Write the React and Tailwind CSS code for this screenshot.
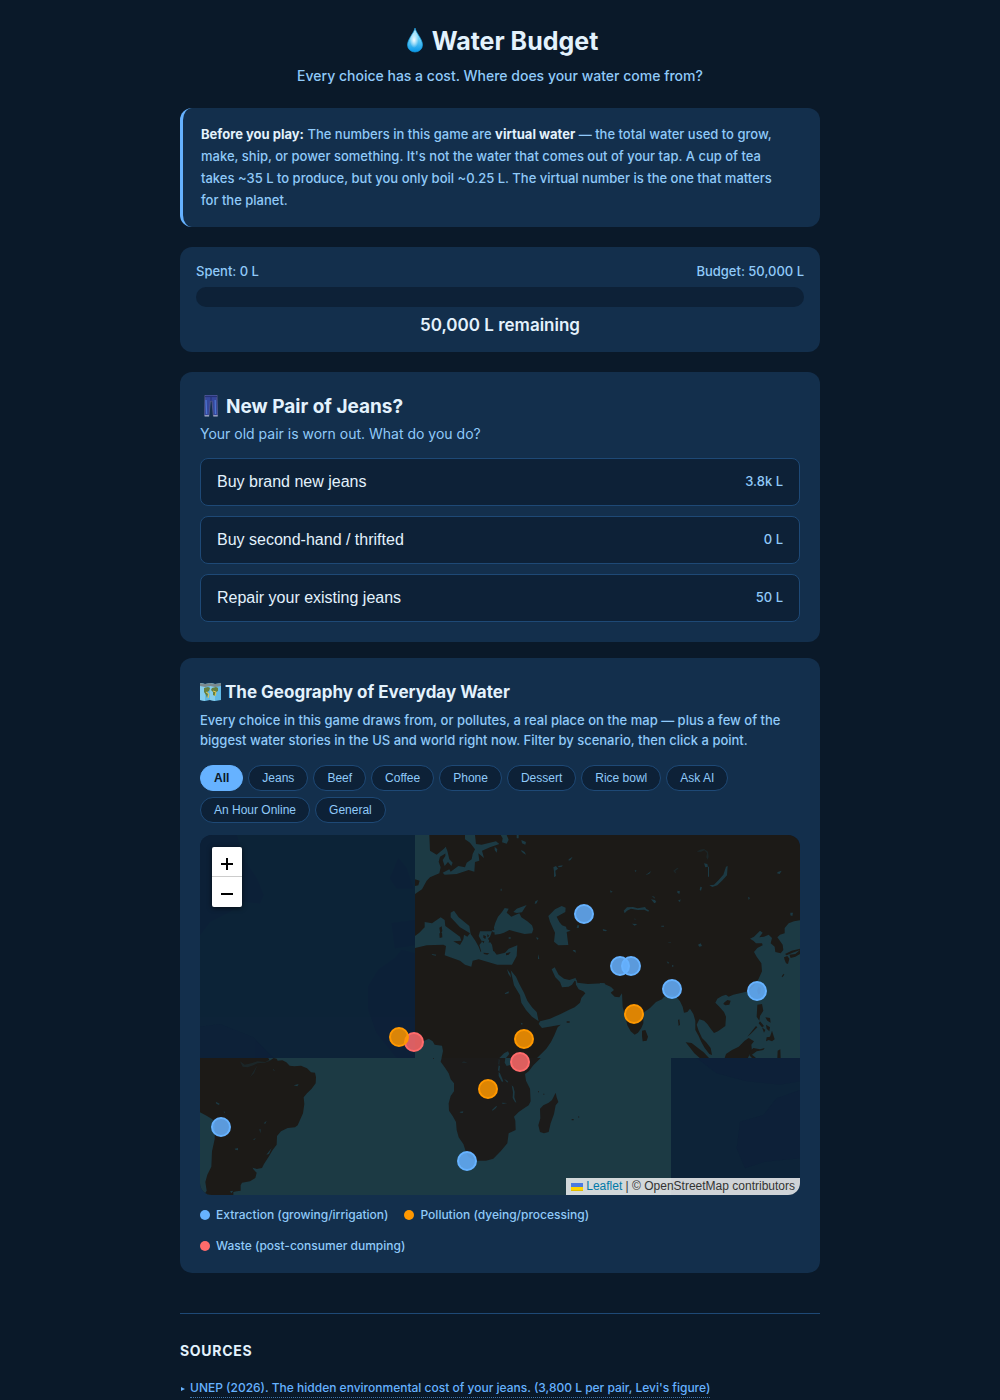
import React, { useState } from "react";

const choices = [
  { label: "Buy brand new jeans", liters: 3800, cost: "3.8k L" },
  { label: "Buy second-hand / thrifted", liters: 0, cost: "0 L" },
  { label: "Repair your existing jeans", liters: 50, cost: "50 L" },
];

const filters = [
  "All",
  "Jeans",
  "Beef",
  "Coffee",
  "Phone",
  "Dessert",
  "Rice bowl",
  "Ask AI",
  "An Hour Online",
  "General",
];

const legend = [
  { label: "Extraction (growing/irrigation)", dot: "bg-[#66b2ff]" },
  { label: "Pollution (dyeing/processing)", dot: "bg-[#ff9800]" },
  { label: "Waste (post-consumer dumping)", dot: "bg-[#ff6b6b]" },
];

const colors = {
  extraction: "#66b2ff",
  pollution: "#ff9800",
  waste: "#ff6b6b",
};

const points = [
  { x: 384, y: 79, type: "extraction" },
  { x: 420, y: 131, type: "extraction" },
  { x: 431, y: 131, type: "extraction" },
  { x: 472, y: 154, type: "extraction" },
  { x: 557, y: 156, type: "extraction" },
  { x: 434, y: 179, type: "pollution" },
  { x: 214, y: 207, type: "waste" },
  { x: 199, y: 202, type: "pollution" },
  { x: 324, y: 204, type: "pollution" },
  { x: 320, y: 227, type: "waste" },
  { x: 288, y: 254, type: "pollution" },
  { x: 21, y: 292, type: "extraction" },
  { x: 267, y: 326, type: "extraction" },
];

const DropIcon = () => (
  <svg viewBox="0 0 26 26" className="h-[26px] w-[26px] shrink-0" aria-hidden="true">
    <defs>
      <linearGradient id="drop" x1="0" y1="0" x2="0" y2="1">
        <stop offset="0" stopColor="#c9f1fb" />
        <stop offset="0.45" stopColor="#6fd0f5" />
        <stop offset="1" stopColor="#0797ea" />
      </linearGradient>
      <radialGradient id="dropShine" cx="0.45" cy="0.5" r="0.5">
        <stop offset="0" stopColor="#fff" stopOpacity="0.95" />
        <stop offset="1" stopColor="#fff" stopOpacity="0" />
      </radialGradient>
    </defs>
    <path
      d="M13 0C12 5 5.500 11 5.500 17a7.500 7 0 0 0 15 0C20.500 11 14 5 13 0Z"
      fill="url(#drop)"
      stroke="#1499dc"
      strokeWidth="0.7"
    />
    <ellipse cx="12.500" cy="12" rx="4.500" ry="8" fill="url(#dropShine)" />
  </svg>
);

const JeansIcon = () => (
  <svg viewBox="0 0 22 24" className="h-6 w-[22px] shrink-0" aria-hidden="true">
    <path
      d="M5 0h12l.6 20.500h-4.300L12 6h-1.600L9 20.500H4.600Z"
      fill="#34479b"
      stroke="#5c5d8e"
      strokeWidth="0.8"
    />
    <path d="M6 5l.6 14M15.200 5l.3 14" stroke="#4d74cf" strokeWidth="1.300" />
    <path d="M5 1.600h12M11 2v4" stroke="#243072" strokeWidth="1" />
    <path d="M4.600 20.800h4.500M13.300 20.800h4.400" stroke="#a9b3cf" strokeWidth="1.300" />
  </svg>
);

const MapIcon = () => (
  <svg viewBox="0 0 21 20" className="h-5 w-[21px] shrink-0" aria-hidden="true">
    <path d="M0 1l5 1 5-1 5 1 6-1v17l-6 1-5-1-5 1-5-1Z" fill="#62b9e4" />
    <path d="M0 1l5 1v17l-5-1ZM10 1l5 1v17l-5-1Z" fill="#86cdec" />
    <path d="M0 1l5 1 5-1 5 1 6-1v3l-6 1-5-1-5 1-5-1Z" fill="#7b898d" />
    <path
      d="M4 6l4-1 2 1-1 3-2 1 1 2-1 4-1-3-2-3ZM12 6l4-1 2 1v3l-2 1-1 4-2-1v-3l-2-2Z"
      fill="#66803f"
    />
    <path d="M6 10l3 2-1 4M13 9l3 1-1 4" stroke="#e0c552" strokeWidth="1" fill="none" />
  </svg>
);

// Water is cut out of the northern tile, land is drawn on the southern ones
const WorldTiles = () => (
  <>
    <rect x="645" width="1155" height="669" fill="#1c1a17" />

    <g transform="translate(630 -15)" fill="#1c3a44">
      <path d="M15 15L58 15L60 62L80 74L100 58L108 50L110 68L90 80L86 95L92 112L88 130L60 142L50 152L36 178L15 192Z" />
      <path d="M106 50L112 62L118 88L128 98L124 108L114 96L104 108L98 90L106 78Z" />
      <path d="M165 15L195 15L198 42L215 44L258 34L268 42L240 52L216 62L222 84L205 70L208 92L195 96L193 125L176 120L140 132L104 134L98 128L118 118L122 125L145 108L165 112L170 98L185 88L188 72L195 58L180 38L165 28Z" />
      <path d="M272 15h18l6 14-6 12-14-4 2-12ZM320 15h6v10h-6ZM334 30l14 6-2 8-10-4ZM334 60l10 6 4 8-8-4-6-6ZM254 50l8 8-2 10-6-8Z" />
      <path d="M15 318L28 308L44 292L44 276L66 280L92 262L104 270L106 288L150 320L154 332L130 334L150 345L160 328L162 314L172 320L180 310L150 292L122 262L122 248L132 242L146 262L178 288L182 312L196 332L206 350L212 366L222 358L240 362L252 364L260 374L285 368L296 356L322 346L320 378L306 404L262 404L206 388L188 392L184 410L165 404L150 392L104 376L108 348L100 344L50 346L15 354Z" />
      <path d="M210 304L246 304L240 320L234 326L246 344L250 366L214 366L208 345L216 335L206 318Z" />
      <path d="M252 292l4-14 8-18 12-14 8-12 12 2-6 12 14 12 10-4 14-6 6 12 18 12 14 12 4 12-4 12-22 2-24-6-22-6-16 8-12 4-16 2Z" />
      <path d="M310 246l10-10 16-6 14-5-8 12-6 10-16 2ZM245 301l22-1-4 6-14 1Z" />
      <path d="M415 258L435 238L455 228L467 233L466 246L440 260L448 276L456 286L468 290L470 298L482 302L470 306L475 345L445 346L432 335L435 308L420 275Z" />
      <path d="M302 421L318 440L328 462L342 488L352 512L366 532L380 546L386 574L366 560L348 540L334 518L330 496L312 466ZM291 417l10 14 2 12-8-12Z" />
      <path d="M425 418L434 412L446 434L462 446L478 450L496 444L502 456L494 452L486 464L476 470L456 472L450 456L436 442Z" />
      <path d="M496 442L502 458L534 462L580 460L588 464L602 470L602 690L375 690L391 674L409 656L423 636L433 616L443 592L452 584L396 594L386 582L390 574L420 566L452 552L476 540L494 532L510 518L514 504L526 490L520 484L506 478L498 464Z" />
      <path d="M40 634l16-8 12 8 6 10 22 3 3 16-5 24H15v-22l16-8Z" />
      <path d="M430 112l8-4 6 8-8 6 2 16-6 4v-18ZM444 108l14-2-2 4-10 2ZM476 88l12-8-6 10-6 2ZM502 286h6l-2 8h-6ZM578 298l12 2-2 4-8-2ZM488 360h8l2 8-8-4ZM378 322l8 2-4 6ZM384 372l4 14-4 2ZM376 214l8-4-4 10-6 2ZM284 490l12-6v6l-10 2ZM332 578l6 2-2 6ZM272 176h3v6h-3ZM296 322h6v4h-6ZM65 372l14 2-2 3-10-2ZM268 684l14-14 12-6 4 8-10 12Z" />
    </g>
    <g transform="translate(630 -15)" fill="#1c1a17">
      <path d="M88 293l7-4 2 14-6 10ZM88 310l8-2 1 14-8 2ZM15 148l14 4-4 14-10 2Z" />
      <path d="M220 315l8 4-2 8-6-4ZM232 312l6 6-6 4ZM215 332l8 2-2 6ZM238 330l4 6-6 2ZM220 368l18 2-6 4-10-2ZM288 370l14-4-6 8-8 2ZM470 574h9v4h-9Z" />
    </g>

    <g transform="translate(1200 -15)">
      <path
        fill="#1c3a44"
        d="M0 459L14 460L18 470L34 472L42 480L32 488L44 500L58 502L66 490L68 530L76 560L82 586L92 604L104 614L114 608L124 594L130 580L130 548L150 534L168 516L186 508L192 500L216 494L232 504L240 514L248 530L252 548L262 546L270 536L280 552L286 572L286 600L296 618L304 636L314 654L328 672L336 675L332 654L318 636L306 624L296 602L290 584L298 568L312 572L322 582L332 596L342 609L354 604L376 588L378 560L372 546L358 530L346 518L352 506L366 498L378 494L386 500L400 494L426 488L444 484L462 468L476 446L486 424L484 400L470 380L462 366L472 354L488 346L486 340L468 340L460 332L450 326L462 320L480 302L488 308L478 322L492 320L506 314L516 324L512 340L524 350L526 366L542 370L550 360L548 344L532 322L540 314L554 310L554 294L566 280L582 274L602 270L602 684L0 684Z"
      />
      <g fill="#1c1a17">
        <path d="M126 602l10-2 8 20-4 12-12 2-2-16ZM257 637l18 2 20 16 16 12 16 17h-28l-16-14-14-18ZM374 684l4-12 18-12 20-10 18-18 12-8 16 10-8 10 2 20-8 10-4 10ZM372 518l10-8 10 2-4 12-12 2-6-4ZM475 470l8 4-2 16-6 4-4-12Z" />
        <path d="M472 524l14-2 4 20-10 16-2 14-8-12ZM480 574l12 14-6 4-10-12ZM496 562l14 2 2 14-10-6ZM498 584l12 8-2 12-8-8ZM486 592l10 8-4 8ZM516 602l8 26-8 6-10-4-8 4 2-12 10-2ZM468 588l4 4-20 20-10 8ZM450 664l10-10 20 4 14-4-4 6-20 4-14 10 12 10h-12l-8-8ZM533 662l8-4 1 26h-10Z" />
        <path d="M552 382l10-4 6 8-4 16-6-2-4-10ZM568 374l18-2 14-12v12l-14 8-14 4ZM545 439l6-8 2 3-6 8ZM555 372l20-10 25-6v4l-22 8-18 8ZM234 570l4-2 2 16-4 4Z" />
      </g>
      <g fill="#1c3a44">
        <path d="M328 166L342 164L356 150L370 134L378 110L383 108L381 136L366 152L352 166L337 171ZM74 250l-3-8 10-10 18-1 14 4 22-4 4 6 8 4-2 4-12-6-20 1-20-4-12 6ZM96 281l16 1-8 5ZM153 208l12 2 4 6-6 4ZM155 198l8 2 2 6ZM232 182l8 2-2 8-6-4ZM234 212l8-4-2 8ZM301 170l5 2-3 10-4-2ZM312 100l10 2 2 8-8 2ZM324 110h3v30h-3ZM533 126l12-4-6 10-8-2ZM571 248h8l-2 10-6-2ZM444 200l6 4-4 6ZM294 344l8-4 4 8-8 2ZM104 120l6 2-4 4ZM138 134l16-11-6 8-10 4ZM30 181l8 4-6 3ZM8 298l14 4-10 1ZM184 287h8v3h-8ZM200 394l8 4-4 3ZM216 404l6 4-6 3Z" />
        <path d="M290 65l10-6 12-2 12 8 2 16-4 8-3-8 2-12-8-8-10 4ZM220 122l12-9 4 2-10 8 3 8-6-4ZM205 336h8v3h-8ZM102 265l8 3-6 2Z" opacity="0.4" />
      </g>
    </g>

    {/* Tiles that have not loaded yet */}
    <rect width="645" height="669" fill="#0d2338" />
    <g fill="#0d1f38" opacity="0.6">
      <path d="M0 0h110l20 70 40 60 20 50-10 25-50-5-40 30-60 30-30 40Z" />
      <path d="M645 355v314h-55l-60-75-25-70v-70l30-50 50-35 20-24Z" />
      <path d="M0 575l60-8 100 40 60 62H0ZM570 130l25-60 25 30 20 60-50 0ZM575 265l70-10v75l-60 10Z" />
    </g>

    <rect y="669" width="1413" height="411" fill="#1c3a44" />
    <rect x="1413" y="669" width="387" height="411" fill="#0d2338" />
    <g fill="#0d1f38" opacity="0.6">
      <path d="M1490 669h310v70l-60 10-100-10-90-24Z" />
      <path d="M1800 765l-70 25-40 50-70 20-10 80 25 60 60-20 105-10Z" />
    </g>

    <g transform="translate(-30 645)">
      <path
        fill="#1c1a17"
        d="M30 24h205l4 8 12-8 9 2 3 6 14-1 12 6 10 10 14 2 20-2 18 8 12 12 12 1 3 14-1 18-12 16-14 14-10 12 2 20-4 28-8 18-8 18-8 6-22 2-20 10-12 14-1 26-12 16-12 20-14 22-6 12-16 3-12-4-4-7 6 12 10 10-4 16-16 10-24 4-4 8v16l-12 2-10 2v20H45l-1-14 6-10-4-26 6-22 12-24 2-46 8-36 1-46-8-14-16-10-21-11Z"
      />
      <g fill="#1c3a44">
        <path d="M77 155l12 6-2 4-8-4ZM101 184l4 2-2 4ZM134 296l10-2v7l-8-2ZM249 57l6 5-5-1ZM311 106l15-4-4 7-6-2ZM221 220l9-8-4 9ZM190 268l8-4-6 7ZM208 238h4l-1 12ZM229 314l16-20-8 18ZM120 424l10-2-6 8Z" />
        <path d="M150 34l14 10 20-4 18-6 24 2 14-8-2 6-14 4-22 2-12 6-18 6-14-2ZM180 82l18-30 4-6-10 24Z" opacity="0.4" />
      </g>
    </g>
    <g transform="translate(600 645)">
      <path
        fill="#1c1b1a"
        d="M125 24L122 35L134 52L146 70L152 88L162 100L162 124L152 138L146 160L147 182L158 198L168 216L170 240L176 262L190 282L198 306L206 322L228 332L258 332L280 326L302 304L322 280L326 250L347 240L346 212L342 200L356 186L370 176L386 166L392 154L390 116L378 92L375 72L386 64L400 46L422 24ZM467 128L470 142L475 156L467 166L462 192L452 220L446 246L432 250L420 246L415 226L421 205L420 176L430 166L446 158L456 150Z"
      />
      <path d="M515 207h6v4h-6ZM534 199l5 2-4 2ZM414 124h3v3h-3ZM430 131h3v3h-3ZM99 24h3v2h-3Z" fill="#1c1b1a" />
      <g fill="#1c3a44">
        <path d="M316 24h16l2 20-14 4-6-10ZM296 46l4 2-2 18-4-6ZM296 66l4 4 10 24-4 2-10-18ZM312 86l12 8-2 4ZM335 106L340 110L344 126L343 142L349 158L345 156L338 144L339 126ZM178 186l12-2-2 5-6-1ZM276 180l10-10 6-3-4 7-10 8ZM306 158l16 1-14 3Z" />
        <path d="M296 26l4 4-2 16-4-4ZM184 38l8-4 12 6-8-1Z" opacity="0.4" />
      </g>
    </g>
  </>
);

const WaterMap = () => {
  const [zoom, setZoom] = useState(1);

  return (
    <div className="relative h-[360px] overflow-hidden rounded-xl bg-[#0d2137]">
      <svg
        viewBox="0 0 600 360"
        preserveAspectRatio="xMidYMid slice"
        className="h-full w-full"
        role="img"
        aria-label="World map of water extraction, pollution and waste"
      >
        <g style={{ transform: `scale(${zoom})`, transformOrigin: "center" }}>
          <svg width="600" height="360" viewBox="0 0 1800 1080">
            <WorldTiles />
          </svg>
          {points.map((p) => (
            <circle
              key={`${p.x}-${p.y}`}
              cx={p.x}
              cy={p.y}
              r="9"
              fill={colors[p.type]}
              fillOpacity="0.85"
              stroke={colors[p.type]}
              strokeWidth="2"
            />
          ))}
        </g>
      </svg>

      {/* Zoom controls */}
      <div className="absolute top-3 left-3 flex flex-col overflow-hidden rounded-xs bg-white shadow-[0_1px_5px_rgba(0,0,0,0.65)]">
        <button
          aria-label="Zoom in"
          onClick={() => setZoom(Math.min(zoom * 2, 8))}
          className="flex h-[30px] w-[30px] items-center justify-center border-b border-[#ccc] pt-1"
        >
          <svg viewBox="0 0 12 12" className="h-3 w-3" aria-hidden="true">
            <path d="M0 6h12M6 0v12" stroke="#000" strokeWidth="2" />
          </svg>
        </button>
        <button
          aria-label="Zoom out"
          onClick={() => setZoom(Math.max(zoom / 2, 1))}
          className="flex h-[30px] w-[30px] items-center justify-center pt-1"
        >
          <svg viewBox="0 0 12 12" className="h-3 w-3" aria-hidden="true">
            <path d="M0 6h12" stroke="#000" strokeWidth="2" />
          </svg>
        </button>
      </div>

      <div className="absolute right-0 bottom-0 flex items-center bg-white/80 px-[5px] font-['Liberation_Sans',sans-serif] text-xs leading-[17px] text-[#333]">
        <a href="https://leafletjs.com" className="flex items-center gap-[3px] text-[#0078a8]">
          <svg viewBox="0 0 12 8" className="h-2 w-3" aria-hidden="true">
            <path fill="#4c7be1" d="M0 0h12v4H0z" />
            <path fill="#ffd500" d="M0 4h12v3H0z" />
            <path fill="#e0bc00" d="M0 7h12v1H0z" />
          </svg>
          Leaflet
        </a>
        <span className="whitespace-pre"> | © OpenStreetMap contributors</span>
      </div>
    </div>
  );
};

const App = () => {
  const [filter, setFilter] = useState("All");
  const [spent, setSpent] = useState(0);
  const budget = 50000;

  return (
    <div className="min-h-screen bg-[#0a1929] font-[Inter,sans-serif] text-[#e3f2fd]">
      <main className="mx-auto max-w-[672px] px-4 pt-6 pb-10">
        <header className="mb-[22px] text-center">
          <h1 className="flex items-center justify-center gap-1 text-[25px] leading-[34px] font-bold">
            <DropIcon />
            Water Budget
          </h1>
          <p className="mt-2 text-sm leading-5 font-medium text-[#90caf9]">
            Every choice has a cost. Where does your water come from?
          </p>
        </header>

        {/* Intro note */}
        <div className="mb-5 rounded-xl border-l-[3px] border-[#66b2ff] bg-[#132f4c] pt-[15px] pr-8 pb-4 pl-[18px]">
          <p className="text-[13px] leading-[22px] font-medium text-[#90caf9]">
            <strong className="font-bold text-[#e3f2fd]">Before you play:</strong> The numbers in
            this game are <strong className="font-bold text-[#e3f2fd]">virtual water</strong> — the
            total water used to grow, make, ship, or power something. It's not the water that comes
            out of your tap. A cup of tea takes ~35 L to produce, but you only boil ~0.25 L. The
            virtual number is the one that matters for the planet.
          </p>
        </div>

        {/* Budget */}
        <section className="mb-5 rounded-xl bg-[#132f4c] p-4">
          <div className="mb-2 flex justify-between text-[13px] leading-4 font-medium text-[#90caf9]">
            <span>Spent: {spent.toLocaleString("en-US")} L</span>
            <span>Budget: {budget.toLocaleString("en-US")} L</span>
          </div>
          <div className="h-5 overflow-hidden rounded-full bg-[#0d2137]">
            <div
              className="h-full bg-[#66b2ff]"
              style={{ width: `${(spent / budget) * 100}%` }}
            ></div>
          </div>
          <p className="mt-2 text-center text-[17px] leading-[21px] font-semibold">
            {(budget - spent).toLocaleString("en-US")} L remaining
          </p>
        </section>

        {/* Scenario */}
        <section className="mb-4 rounded-xl bg-[#132f4c] p-5">
          <h2 className="mb-1 flex items-center gap-1 text-[19px] leading-[30px] font-bold">
            <JeansIcon />
            New Pair of Jeans?
          </h2>
          <p className="mb-4 text-sm leading-4 text-[#90caf9]">
            Your old pair is worn out. What do you do?
          </p>
          <div className="flex flex-col gap-2.5">
            {choices.map((choice) => (
              <button
                key={choice.label}
                onClick={() => setSpent(choice.liters)}
                className="flex h-12 items-center justify-between rounded-lg border border-[#1e4976] bg-[#0d2137] px-4 font-['Liberation_Sans',sans-serif] text-base"
              >
                <span>{choice.label}</span>
                <span className="font-[Inter,sans-serif] text-[13px] font-medium text-[#90caf9]">
                  {choice.cost}
                </span>
              </button>
            ))}
          </div>
        </section>

        {/* Map */}
        <section className="rounded-xl bg-[#132f4c] p-5">
          <h2 className="mb-1 flex items-center gap-1 text-[17px] leading-7 font-bold">
            <MapIcon />
            The Geography of Everyday Water
          </h2>
          <p className="mb-[15px] text-[13px] leading-5 font-medium text-[#90caf9]">
            Every choice in this game draws from, or pollutes, a real place on the map — plus a few
            of the biggest water stories in the US and world right now. Filter by scenario, then
            click a point.
          </p>
          <div className="mb-3 flex flex-wrap gap-x-[5px] gap-y-1.5">
            {filters.map((name) => (
              <button
                key={name}
                onClick={() => setFilter(name)}
                className={`h-[26px] rounded-full border px-[13px] font-['Liberation_Sans',sans-serif] text-xs ${
                  filter === name
                    ? "border-[#66b2ff] bg-[#66b2ff] font-bold text-[#0a1929]"
                    : "border-[#1e4976] bg-[#0d2137] text-[#90caf9]"
                }`}
              >
                {name}
              </button>
            ))}
          </div>

          <WaterMap />

          <ul className="mt-3 flex flex-wrap gap-4 text-xs leading-[15px] font-medium text-[#90caf9]">
            {legend.map((item) => (
              <li key={item.label} className="flex items-center gap-1.5">
                <span className={`h-2.5 w-2.5 rounded-full ${item.dot}`}></span>
                {item.label}
              </li>
            ))}
          </ul>
        </section>

        <footer className="mt-10 border-t border-[#1e4976] pt-[27px]">
          <h3 className="mb-[18px] text-sm leading-5 font-bold tracking-wider">SOURCES</h3>
          <ul className="text-xs leading-5 font-medium text-[#66b2ff]">
            <li className="flex items-center gap-1">
              <svg viewBox="0 0 6 6" className="h-1.5 w-1.5" aria-hidden="true">
                <path d="M1 1l4 2-4 2Z" fill="#66b2ff" />
              </svg>
              <a
                href="https://www.unep.org"
                className="border-b border-dotted border-[#66b2ff]/60 leading-[18px]"
              >
                UNEP (2026). The hidden environmental cost of your jeans. (3,800 L per pair, Levi's
                figure)
              </a>
            </li>
          </ul>
        </footer>
      </main>
    </div>
  );
};

export default App;
